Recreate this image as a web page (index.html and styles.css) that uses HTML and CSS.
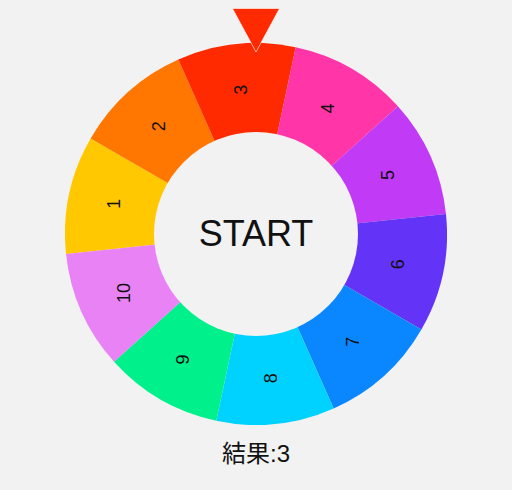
FILE: index.html
```html
<!DOCTYPE html>
<html lang="ja">
<head>
  <meta charset="UTF-8" />
  <meta name="viewport" content="width=device-width, initial-scale=1.0" />
  <title>ルーレット</title>
  <link rel="stylesheet" href="styles.css">
</head>

<body>
  <div class="roulette">
    <!-- Pointer above the wheel -->
    <svg class="pointer" viewBox="0 0 48 45" width="48" height="45">
      <polygon points="0.5,0.5 47.5,0.5 24,44" />
    </svg>

    <svg id="wheel" class="wheel" viewBox="0 0 382 382" width="382" height="382"></svg>

    <button id="startButton" class="start">START</button>
  </div>

  <p class="result">結果:<span id="result">3</span></p>

  <script>
    const colors = [
      "#ffc800", "#ff7600", "#ff2a00", "#ff35a8", "#c13af5",
      "#6433f8", "#0a87ff", "#00d2ff", "#00f08c", "#e882f5"
    ];
    const cx = 191;
    const cy = 191;
    const outer = 191;
    const labelRadius = 145;
    const offset = -96; // segment 1 starts here (degrees, clockwise from top)

    function point(deg, r) {
      const rad = deg * Math.PI / 180;
      return [cx + r * Math.sin(rad), cy - r * Math.cos(rad)];
    }

    const wheel = document.getElementById("wheel");
    const ns = "http://www.w3.org/2000/svg";

    colors.forEach((color, i) => {
      const from = offset + i * 36;
      const to = from + 36;
      const a = point(from, outer);
      const b = point(to, outer);

      const slice = document.createElementNS(ns, "path");
      slice.setAttribute("d", `M${cx} ${cy} L${a[0]} ${a[1]} A${outer} ${outer} 0 0 1 ${b[0]} ${b[1]} Z`);
      slice.setAttribute("fill", color);
      wheel.appendChild(slice);

      // Number label in the middle of the slice
      const c = point(from + 18, labelRadius);
      const label = document.createElementNS(ns, "text");
      label.setAttribute("x", c[0]);
      label.setAttribute("y", c[1]);
      label.setAttribute("class", "label");
      label.setAttribute("transform", `rotate(-90 ${c[0]} ${c[1]})`);
      label.textContent = i + 1;
      wheel.appendChild(label);
    });
  </script>
</body>
</html>
```

FILE: styles.css
```css
body {
  margin: 0;
  background-color: #f2f2f2;
  font-family: "Liberation Sans", "Noto Sans CJK JP", sans-serif;
  color: #111;
}

.roulette {
  position: relative;
  width: 382px;
  height: 382px;
  margin: 43px auto 0;
}

.wheel {
  display: block;
}

.label {
  font-size: 18px;
  fill: #111;
  text-anchor: middle;
  dominant-baseline: central;
}

.pointer {
  position: absolute;
  left: 167px;
  top: -35px;
  z-index: 1;
}

.pointer polygon {
  fill: #ff2a00;
  stroke: rgba(255, 255, 255, 0.6);
  stroke-width: 1;
}

.start {
  position: absolute;
  left: 89px;
  top: 89px;
  width: 204px;
  height: 204px;
  border: none;
  border-radius: 50%;
  padding: 0;
  background-color: #f2f2f2;
  color: #111;
  font-family: "Liberation Sans", sans-serif;
  font-size: 36px;
  cursor: pointer;
}

.result {
  margin: 15px 0 0;
  text-align: center;
  font-size: 24px;
  line-height: 28px;
}
```
